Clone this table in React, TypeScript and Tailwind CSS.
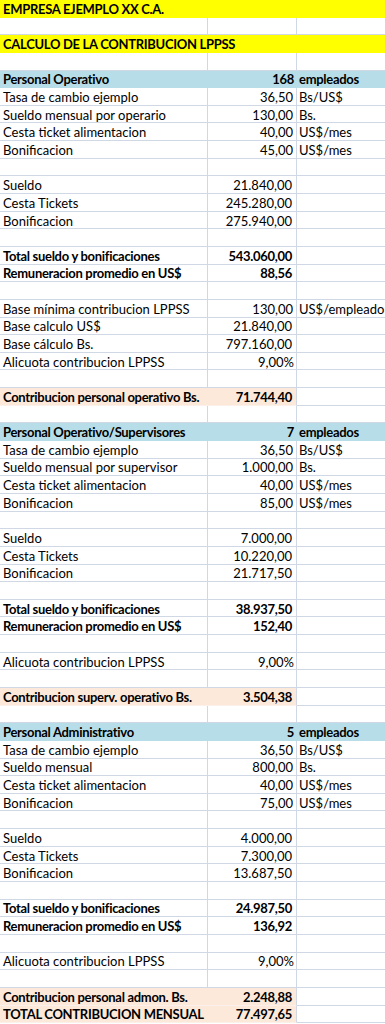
import React from 'react';

type Kind = 'title' | 'blank' | 'head' | 'row' | 'bold' | 'peach';

interface Row {
  k: Kind;
  a?: string;
  b?: string;
  c?: string;
}

const rows: Row[] = [
  { k: 'title', a: 'EMPRESA EJEMPLO XX C.A.' },
  { k: 'blank' },
  { k: 'title', a: 'CALCULO DE LA CONTRIBUCION LPPSS' },
  { k: 'blank' },
  { k: 'head', a: 'Personal Operativo', b: '168', c: 'empleados' },
  { k: 'row', a: 'Tasa de cambio ejemplo', b: '36,50', c: 'Bs/US$' },
  { k: 'row', a: 'Sueldo mensual por operario', b: '130,00', c: 'Bs.' },
  { k: 'row', a: 'Cesta ticket alimentacion', b: '40,00', c: 'US$/mes' },
  { k: 'row', a: 'Bonificacion', b: '45,00', c: 'US$/mes' },
  { k: 'blank' },
  { k: 'row', a: 'Sueldo', b: '21.840,00 ' },
  { k: 'row', a: 'Cesta Tickets', b: '245.280,00 ' },
  { k: 'row', a: 'Bonificacion', b: '275.940,00 ' },
  { k: 'blank' },
  { k: 'bold', a: 'Total sueldo y bonificaciones', b: '543.060,00 ' },
  { k: 'bold', a: 'Remuneracion promedio en US$', b: '88,56 ' },
  { k: 'blank' },
  { k: 'row', a: 'Base mínima contribucion LPPSS', b: '130,00', c: 'US$/empleado' },
  { k: 'row', a: 'Base calculo US$', b: '21.840,00 ' },
  { k: 'row', a: 'Base cálculo Bs.', b: '797.160,00 ' },
  { k: 'row', a: 'Alicuota contribucion LPPSS', b: '9,00%' },
  { k: 'blank' },
  { k: 'peach', a: 'Contribucion personal operativo Bs.', b: '71.744,40 ' },
  { k: 'blank' },
  { k: 'head', a: 'Personal Operativo/Supervisores', b: '7', c: 'empleados' },
  { k: 'row', a: 'Tasa de cambio ejemplo', b: '36,50', c: 'Bs/US$' },
  { k: 'row', a: 'Sueldo mensual por supervisor', b: '1.000,00', c: 'Bs.' },
  { k: 'row', a: 'Cesta ticket alimentacion', b: '40,00', c: 'US$/mes' },
  { k: 'row', a: 'Bonificacion', b: '85,00', c: 'US$/mes' },
  { k: 'blank' },
  { k: 'row', a: 'Sueldo', b: '7.000,00 ' },
  { k: 'row', a: 'Cesta Tickets', b: '10.220,00 ' },
  { k: 'row', a: 'Bonificacion', b: '21.717,50 ' },
  { k: 'blank' },
  { k: 'bold', a: 'Total sueldo y bonificaciones', b: '38.937,50 ' },
  { k: 'bold', a: 'Remuneracion promedio en US$', b: '152,40 ' },
  { k: 'blank' },
  { k: 'row', a: 'Alicuota contribucion LPPSS', b: '9,00%' },
  { k: 'blank' },
  { k: 'peach', a: 'Contribucion superv. operativo Bs.', b: '3.504,38 ' },
  { k: 'blank' },
  { k: 'head', a: 'Personal Administrativo', b: '5', c: 'empleados' },
  { k: 'row', a: 'Tasa de cambio ejemplo', b: '36,50', c: 'Bs/US$' },
  { k: 'row', a: 'Sueldo mensual', b: '800,00', c: 'Bs.' },
  { k: 'row', a: 'Cesta ticket alimentacion', b: '40,00', c: 'US$/mes' },
  { k: 'row', a: 'Bonificacion', b: '75,00', c: 'US$/mes' },
  { k: 'blank' },
  { k: 'row', a: 'Sueldo', b: '4.000,00 ' },
  { k: 'row', a: 'Cesta Tickets', b: '7.300,00 ' },
  { k: 'row', a: 'Bonificacion', b: '13.687,50 ' },
  { k: 'blank' },
  { k: 'bold', a: 'Total sueldo y bonificaciones', b: '24.987,50 ' },
  { k: 'bold', a: 'Remuneracion promedio en US$', b: '136,92 ' },
  { k: 'blank' },
  { k: 'row', a: 'Alicuota contribucion LPPSS', b: '9,00%' },
  { k: 'blank' },
  { k: 'peach', a: 'Contribucion personal admon. Bs.', b: '2.248,88 ' },
  { k: 'peach', a: 'TOTAL CONTRIBUCION MENSUAL', b: '77.497,65 ' },
];

const grid = "border-[#d0d7e5]";
const rowBase = "flex h-[17.655px] box-border border-b leading-none";
const cellA = "w-[208px] shrink-0 flex items-center pt-[2px] pl-[3px] whitespace-nowrap";
const cellB = "w-[89px] shrink-0 flex items-center pt-[2px] justify-end whitespace-nowrap";
const cellC = "flex-1 flex items-center pt-[2px] pl-[2px] whitespace-nowrap";
const bold = "font-bold tracking-[-0.3px]";

function Value({ v }: { v?: string }) {
  if (!v) return null;
  // valores con formato de contabilidad dejan un hueco a la derecha
  const padded = v.endsWith(' ');
  return <span className={padded ? 'pr-[4px]' : v.endsWith('%') ? 'pr-[2px]' : 'pr-[3px]'}>{v.trim()}</span>;
}

function SheetRow({ r }: { r: Row }) {
  if (r.k === 'title') {
    return (
      <div className={`${rowBase} bg-[#ffff00] border-[#ffff00] ${bold}`}>
        <div className={cellA}>{r.a}</div>
      </div>
    );
  }
  if (r.k === 'head') {
    return (
      <div className={`${rowBase} bg-[#b7dee8] border-[#b7dee8] ${bold}`}>
        <div className={cellA}>{r.a}</div>
        <div className={cellB}><Value v={r.b} /></div>
        <div className={cellC}>{r.c}</div>
      </div>
    );
  }
  if (r.k === 'peach') {
    return (
      <div className={`${rowBase} ${grid} ${bold}`}>
        <div className="w-[297px] shrink-0 flex bg-[#fde9d9] border-r border-[#d0d7e5] -mb-px border-b border-b-[#fbf1ea]">
          <div className="w-[208px] shrink-0 flex items-center pt-[2px] pl-[3px] whitespace-nowrap">{r.a}</div>
          <div className="w-[88px] shrink-0 flex items-center pt-[2px] justify-end whitespace-nowrap"><Value v={r.b} /></div>
        </div>
        <div className={cellC} />
      </div>
    );
  }
  return (
    <div className={`${rowBase} ${grid} ${r.k === 'bold' ? bold : ''}`}>
      <div className={`${cellA} border-r ${grid}`}>{r.a}</div>
      <div className={`${cellB} border-r ${grid}`}><Value v={r.b} /></div>
      <div className={cellC}>{r.c}</div>
    </div>
  );
}

export default function App() {
  return (
    <div className="w-[385px] h-[1024px] overflow-hidden bg-white text-black text-[13px] font-['Lato',sans-serif]">
      {rows.map((r, i) => (
        <SheetRow key={i} r={r} />
      ))}
    </div>
  );
}
